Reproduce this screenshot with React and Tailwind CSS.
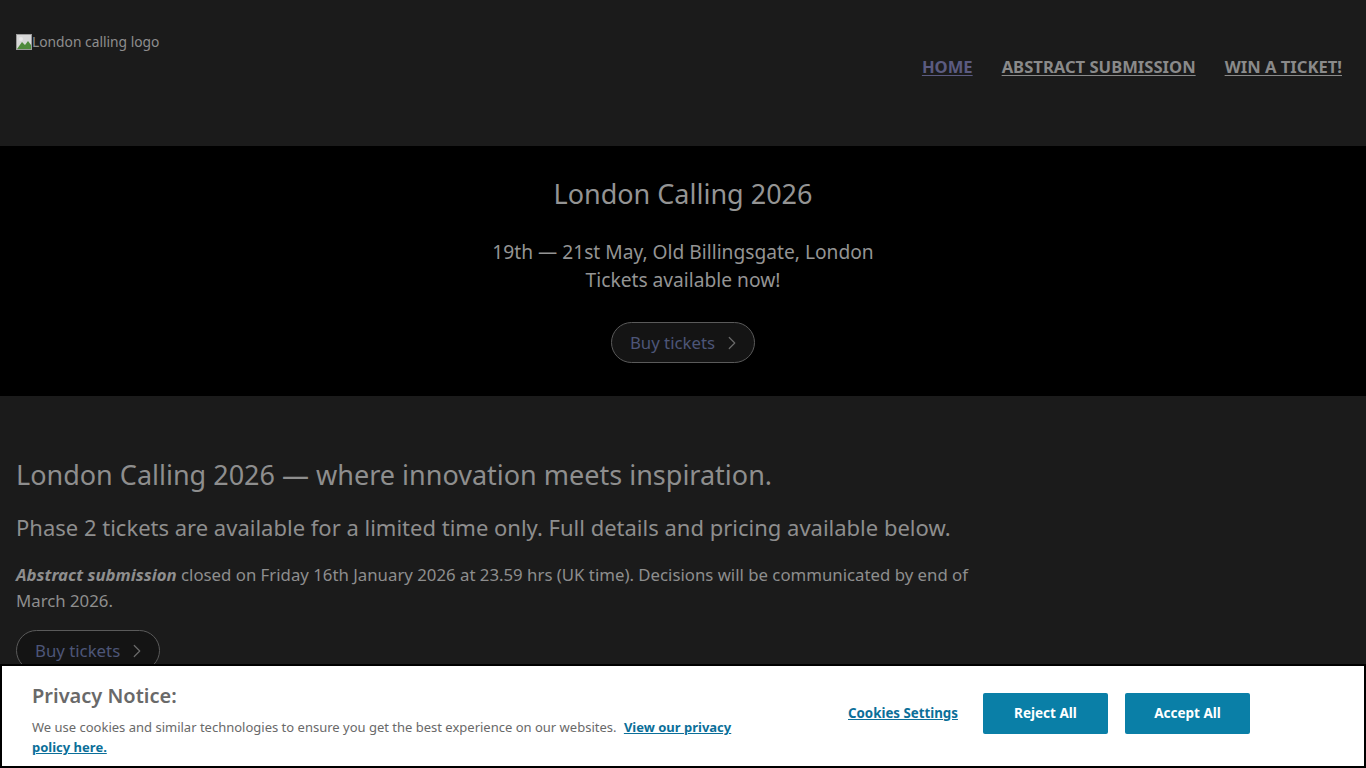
import { ChevronRight } from 'lucide-react';

const NAV = ['Home', 'Abstract submission', 'Win a ticket!'];

const BrokenImage = () => (
  <svg width="16" height="16" viewBox="0 0 16 16" className="shrink-0">
    <rect x="0.5" y="0.5" width="15" height="15" fill="#d8d8d8" stroke="#9a9a9a" />
    <path d="M1 15 L6 8 L9 11 L12 7 L15 11 L15 15 Z" fill="#4f8a3c" />
    <circle cx="5" cy="5" r="2" fill="#e8e8e8" />
  </svg>
);

const BuyButton = () => (
  <button className="inline-flex items-center gap-[6px] h-[41px] pl-[18px] pr-[11px] rounded-full border border-[#5a5a5a] bg-[#141414] text-[16.8px] text-[#4d5678]">
    Buy tickets
    <ChevronRight size={22} strokeWidth={1.3} className="text-[#6a6a6a]" />
  </button>
);

export default function App() {
  return (
    <div className="min-h-screen bg-[#1b1b1b] font-['Noto_Sans',sans-serif] text-[#8e8e8e]">
      {/* header */}
      <header className="h-[146px] flex justify-between bg-[#1b1b1b] px-4">
        <div className="flex items-center pt-[32px] self-start text-[13.8px] text-[#8e8e8e]">
          <BrokenImage />
          <span>London calling logo</span>
        </div>
        <nav className="flex items-start gap-[29px] pt-[55px] pr-2">
          {NAV.map((n, i) => (
            <a
              key={n}
              href="#"
              className={`uppercase font-bold text-[16.6px] underline underline-offset-2 ${i === 0 ? 'text-[#5b5b80]' : 'text-[#8a8a8a]'}`}
            >
              {n}
            </a>
          ))}
        </nav>
      </header>

      {/* hero */}
      <section className="h-[250px] bg-black flex flex-col items-center pt-[26px] text-center">
        <h1 className="text-[27px] leading-[44px] text-[#949494]">London Calling 2026</h1>
        <p className="mt-[22px] text-[19.2px] leading-[28px] text-[#949494]">
          19th — 21st May, Old Billingsgate, London
          <br />
          Tickets available now!
        </p>
        <div className="mt-[28px]">
          <BuyButton />
        </div>
      </section>

      {/* main */}
      <main className="px-4 pt-[59px] pb-[200px]">
        <div className="max-w-[990px]">
          <h2 className="text-[27px] leading-[40px] text-[#8e8e8e]">
            London Calling 2026 — where innovation meets inspiration.
          </h2>
          <p className="mt-[16px] text-[22px] leading-[32px] text-[#8e8e8e]">
            Phase 2 tickets are available for a limited time only. Full details and pricing available below.
          </p>
          <p className="mt-[19px] text-[16.8px] leading-[26px] text-[#8e8e8e]">
            <em className="font-bold">Abstract submission</em> closed on Friday 16th January 2026 at 23.59 hrs (UK time). Decisions will be communicated by end of March 2026.
          </p>
          <div className="mt-[16px]">
            <BuyButton />
          </div>
        </div>
      </main>

      {/* cookie banner */}
      <div className="fixed left-0 right-0 bottom-0 h-[104px] bg-white border-2 border-black flex items-start">
        <div className="w-[730px] pl-[30px] pt-[16px]">
          <h3 className="text-[20px] leading-[28px] font-semibold text-[#696969]">Privacy Notice:</h3>
          <p className="mt-[7px] text-[13px] leading-[20px] text-[#696969]">
            We use cookies and similar technologies to ensure you get the best experience on our websites.{' '}
            <a href="#" className="ml-1 font-bold text-[#0b6f99] underline">View our privacy policy here.</a>
          </p>
        </div>
        <div className="flex items-center pt-[27px] pl-[116px]">
          <a href="#" className="text-[13.3px] font-bold text-[#0b6f99] underline">Cookies Settings</a>
          <button className="ml-[25px] w-[125px] h-[41px] rounded-[2px] bg-[#0a7fa7] text-white text-[13.5px] font-bold">Reject All</button>
          <button className="ml-[17px] w-[125px] h-[41px] rounded-[2px] bg-[#0a7fa7] text-white text-[13.5px] font-bold">Accept All</button>
        </div>
      </div>
    </div>
  );
}
